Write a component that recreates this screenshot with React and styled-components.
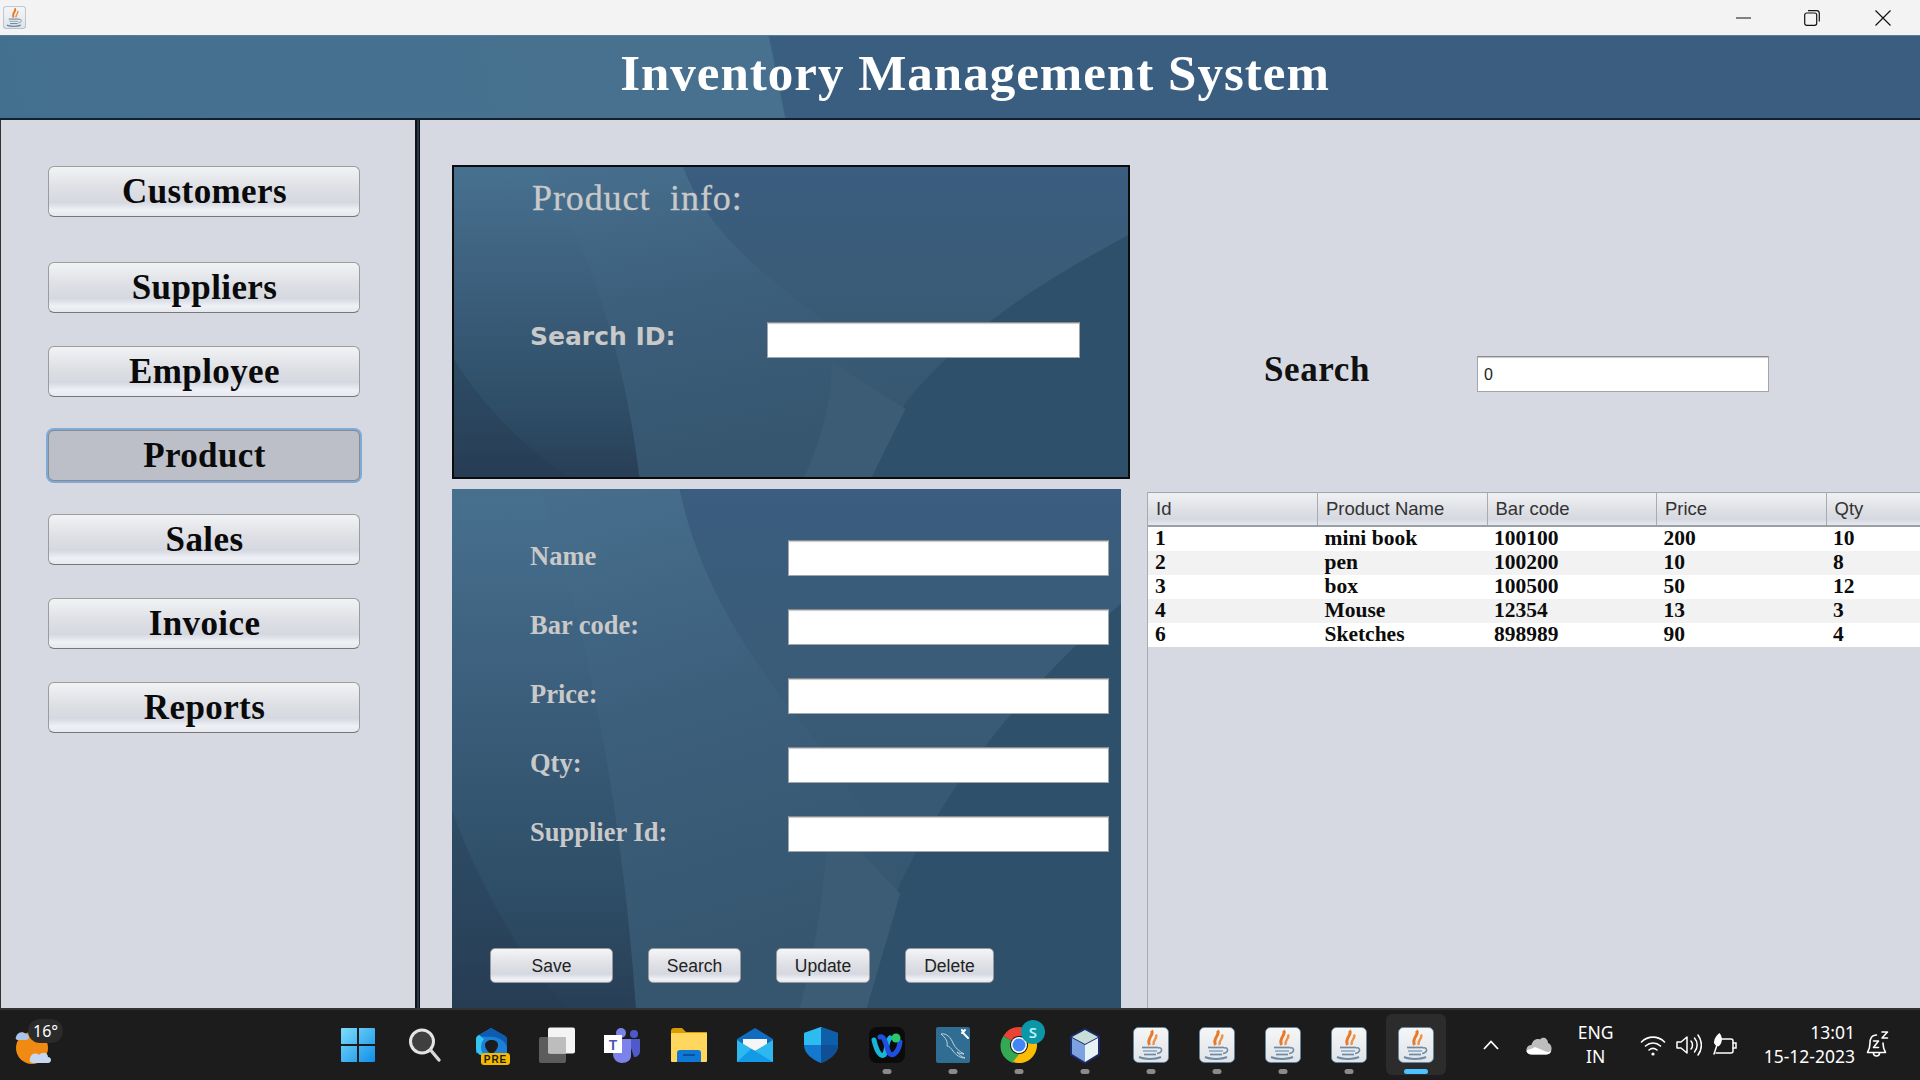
import React from 'react';
import styled, { createGlobalStyle } from 'styled-components';

const serif = '"Liberation Serif", "Times New Roman", serif';
const sans = '"Liberation Sans", Arial, sans-serif';
const ui = '"Noto Sans", "Open Sans", sans-serif';

const GlobalStyle = createGlobalStyle`
    html, body {
        margin: 0;
        padding: 0;
        overflow: hidden;
        background: #d6d9e1;
    }
    * {
        box-sizing: border-box;
    }
`;

const Screen = styled.div`
    width: 1920px;
    height: 1080px;
    display: flex;
    flex-direction: column;
    overflow: hidden;
`;

const TitleBar = styled.div`
    height: 35px;
    flex: none;
    display: flex;
    align-items: center;
    padding-left: 3px;
    background: #f3f3f3;
`;

const WindowControls = styled.div`
    margin-left: auto;
    display: flex;
    align-items: center;
    padding-right: 29px;
    gap: 55px;
`;

const MinimizeGlyph = styled.svg`
    margin-right: -2px;
`;

const Header = styled.header`
    height: 85px;
    flex: none;
    display: flex;
    align-items: center;
    justify-content: center;
    padding: 0 0 8px 30px;
    border-top: 1px solid #5b7c98;
    border-bottom: 2px solid #14202b;
    background: linear-gradient(78.6deg, #44708f 0%, #48718f 40.5%, #3a5e80 40.6%, #3a5d80 100%);
`;

const Title = styled.h1`
    margin: 0;
    font: bold 51px ${serif};
    letter-spacing: 1px;
    color: #fff;
    white-space: nowrap;
`;

const Body = styled.div`
    flex: 1;
    min-height: 0;
    display: flex;
    background: #24394b;
`;

const Sidebar = styled.nav`
    width: 417px;
    flex: none;
    display: flex;
    flex-direction: column;
    align-items: flex-start;
    gap: 33px;
    padding: 46px 0 0 47px;
    border-left: 1px solid #333;
    border-right: 2px solid #111;
    background: #d6d9e1;
`;

const NavButton = styled.button`
    width: 312px;
    height: 51px;
    flex: none;
    padding: 0 0 0 1px;
    margin-bottom: ${p => p.$extra || 0}px;
    border: 1px solid #9c9c9c;
    border-bottom-color: #777;
    border-radius: 6px;
    font: bold 35px ${serif};
    letter-spacing: 0.4px;
    color: #0a0a0a;
    background: ${p => p.$active
        ? '#bcbfc7'
        : 'linear-gradient(#f2f3f5 0%, #dfe1e6 40%, #d5d8e0 72%, #eff1f7 88%, #e6e8ee 100%)'};
    box-shadow: ${p => p.$active ? '0 0 0 2px #7fa9d6' : 'none'};
    ${p => p.$active && 'border-color: #868a92;'}
`;

const Main = styled.main`
    flex: 1;
    min-width: 0;
    display: flex;
    gap: 17px;
    margin-left: 2px;
    padding: 45px 0 0 32px;
    border-left: 1px solid #111;
    background: #d6d9e1;
`;

const LeftColumn = styled.div`
    width: 678px;
    flex: none;
    display: flex;
    flex-direction: column;
    gap: 10px;
`;

const WavePanel = styled.section`
    position: relative;
    overflow: hidden;
    background: #365875;
`;

const InfoPanel = styled(WavePanel)`
    height: 314px;
    flex: none;
    padding: 10px 0 0 78px;
    border: 2px solid #0c0c0c;
`;

const FormPanel = styled(WavePanel)`
    width: 669px;
    flex: 1;
    padding: 51px 0 0 38px;
`;

const WaveSvg = styled.svg`
    position: absolute;
    left: 0;
    top: 0;
    width: 100%;
    height: 100%;
`;

const PanelContent = styled.div`
    position: relative;
`;

const PanelTitle = styled.h2`
    margin: 0 0 103px;
    font: normal 36px/42px ${serif};
    letter-spacing: 0.9px;
    white-space: pre;
    color: #c9c9c9;
    -webkit-text-stroke: 0.3px #c9c9c9;
`;

const SearchIdRow = styled.div`
    display: flex;
    align-items: center;
`;

const SearchIdLabel = styled.label`
    width: 235px;
    padding: 0 0 7px;
    text-indent: -2px;
    font: bold 25px ${'"DejaVu Sans", Verdana, sans-serif'};
    color: #c9c9c9;
`;

const TextField = styled.input`
    width: ${p => p.$width}px;
    height: 36px;
    flex: none;
    padding: 2px 6px 0;
    border: 1px solid #a2a5aa;
    border-top-color: #8a8a8a;
    border-radius: 0;
    outline: none;
    font: 16px ${sans};
    color: #222;
    background: #fff;
    box-shadow: inset 0 2px 1px -1px #c9c9c9;
`;

const FormGrid = styled.div`
    display: grid;
    grid-template-columns: 258px 321px;
    grid-auto-rows: 36px;
    row-gap: 33px;
    align-items: center;
    margin-left: 40px;
`;

const FormLabel = styled.label`
    font: bold 26.5px ${serif};
    color: #c9c9c9;
    padding-bottom: 4px;
`;

const ButtonRow = styled.div`
    display: flex;
    gap: 35px;
    margin-top: 96px;
`;

const SmallButton = styled.button`
    width: ${p => p.$width}px;
    height: 35px;
    padding: 2px 0 0;
    border: 1px solid #9a9a9a;
    border-radius: 5px;
    font: 17.5px ${sans};
    color: #222;
    background: linear-gradient(#f4f5f7 0%, #dfe1e6 45%, #d5d8e0 75%, #f0f2f7 92%, #e4e6ec 100%);
`;

const RightColumn = styled.div`
    flex: 1;
    min-width: 0;
    display: flex;
    flex-direction: column;
`;

const SearchRow = styled.div`
    display: flex;
    align-items: center;
    height: 36px;
    flex: none;
    margin: 191px 0 100px;
    padding-left: 117px;
`;

const SearchLabel = styled.label`
    width: 213px;
    font: bold 35px ${serif};
    letter-spacing: 0.6px;
    color: #111;
    padding-bottom: 8px;
`;

const TableWrap = styled.div`
    flex: 1;
    overflow: hidden;
    border-left: 1px solid #a8abb0;
`;

const Table = styled.table`
    width: 848px;
    table-layout: fixed;
    border-collapse: collapse;
`;

const HeadCell = styled.th`
    height: 33px;
    padding: 0 0 0 8px;
    text-align: left;
    font: normal 18.5px ${sans};
    color: #333;
    border-top: 1px solid #a4a7ac;
    border-right: 1px solid #a8abb0;
    border-bottom: 2px solid #9a9ea6;
    background: linear-gradient(#f0f1f3 0%, #dfe1e6 50%, #d5d8e0 80%, #e8eaf0 100%);
`;

const Row = styled.tr`
    height: 24.2px;
    background: ${p => p.$odd ? '#f2f2f2' : '#fff'};
`;

const Cell = styled.td`
    padding: 0 0 2px 7px;
    font: bold 21.5px/22px ${serif};
    color: #0c0c0c;
    white-space: nowrap;
`;

const Taskbar = styled.footer`
    height: 72px;
    flex: none;
    display: flex;
    align-items: stretch;
    border-top: 2px solid #333;
    background: #1c1c1c;
    color: #fff;
`;

const WeatherBox = styled.div`
    position: relative;
    width: 325px;
    flex: none;
    padding: 13px 0 0 15px;
`;

const TempPill = styled.span`
    position: absolute;
    left: 28px;
    top: 9px;
    padding: 0 5px;
    height: 24px;
    border-radius: 12px;
    font: 16px/24px ${ui};
    background: #2b2b2b;
`;

const AppStrip = styled.div`
    display: flex;
`;

const AppSlot = styled.div`
    position: relative;
    width: 66.1px;
    flex: none;
    display: flex;
    justify-content: center;
    padding-top: 17px;
    &::before {
        content: '';
        display: ${p => p.$active ? 'block' : 'none'};
        position: absolute;
        left: 3px;
        right: 3px;
        top: 4px;
        bottom: 5px;
        border-radius: 6px;
        background: #2c2c2c;
    }
    svg {
        position: relative;
    }
`;

const RunDot = styled.span`
    position: absolute;
    bottom: 6px;
    left: 50%;
    width: ${p => p.$active ? 24 : 9}px;
    height: 5px;
    transform: translateX(-50%);
    border-radius: 3px;
    background: ${p => p.$active ? '#4cc2ff' : '#8a8a8a'};
`;

const Tray = styled.div`
    margin-left: auto;
    display: flex;
    align-items: center;
    padding: 0 27px 0 0;
`;

const TrayItem = styled.div`
    width: ${p => p.$width}px;
    margin-left: ${p => p.$gap || 0}px;
    display: flex;
    justify-content: center;
    align-items: center;
`;

const TrayText = styled.div`
    margin-left: ${p => p.$gap || 0}px;
    padding-bottom: 2px;
    font: 17.5px/24px ${ui};
    text-align: ${p => p.$align};
    white-space: nowrap;
`;

const Wave = () => (
    <WaveSvg viewBox="0 0 100 100" preserveAspectRatio="none">
        <defs>
            <linearGradient id="waveBase" x1="0" y1="0" x2="0" y2="1">
                <stop offset="0" stopColor="#3a5d80" />
                <stop offset="0.35" stopColor="#3a5c78" />
                <stop offset="1" stopColor="#33546c" />
            </linearGradient>
            <linearGradient id="waveBand" x1="0" y1="0" x2="0.3" y2="1">
                <stop offset="0" stopColor="#48718f" />
                <stop offset="0.5" stopColor="#3c5f7c" />
                <stop offset="1" stopColor="#36566f" />
            </linearGradient>
            <linearGradient id="waveLeft" x1="0" y1="0" x2="0" y2="1">
                <stop offset="0" stopColor="#47708f" />
                <stop offset="0.4" stopColor="#3b5e7b" />
                <stop offset="0.75" stopColor="#2f4f68" />
                <stop offset="1" stopColor="#283f56" />
            </linearGradient>
        </defs>
        <rect width="100" height="100" fill="url(#waveBase)" />
        <path d="M0 0 L34 0 C37 18 44 32 54 48 C62 62 70 78 76 100 L0 100 Z" fill="url(#waveBand)" />
        <path d="M0 0 L13 0 C19 22 25 55 27.5 100 L0 100 Z" fill="url(#waveLeft)" />
        <path d="M0 62 C4 76 10 90 17 100 L0 100 Z" fill="#24394f" opacity="0.3" />
        <path d="M100 22 C88 36 76 52 67 76 L61 100 L100 100 Z" fill="#2f506b" />
        <path d="M56 63 C56 78 54 90 52 100 L62 100 L67 78 Z" fill="#3b5c74" />
    </WaveSvg>
);

const JavaIcon = ({ size = 36 }) => (
    <svg width={size} height={size} viewBox="0 0 36 36" fill="none">
        <defs>
            <linearGradient id="javaTile" x1="0" y1="0" x2="0" y2="1">
                <stop offset="0" stopColor="#f6f6f6" />
                <stop offset="1" stopColor="#dfe3e8" />
            </linearGradient>
        </defs>
        <rect x="0.5" y="0.5" width="35" height="35" rx="5" fill="url(#javaTile)" stroke="#5b84a8" strokeOpacity="0.7" />
        <path d="M18.5 3.5 C22 8 13 10.5 16.5 18" stroke="#e8792a" strokeWidth="3" />
        <path d="M23 7.5 C25 11 19.5 13 20.5 18" stroke="#ee924a" strokeWidth="2.4" />
        <path d="M9 20.5 H25" stroke="#6d8ba5" strokeWidth="1.7" />
        <path d="M10 24 H24" stroke="#8aa3b8" strokeWidth="1.5" />
        <path d="M11 27.5 H23" stroke="#6d8ba5" strokeWidth="1.7" />
        <path d="M25 21 C29 20 29.5 24 27 25.5 C26 26 25 26.5 24 26.5" stroke="#6d8ba5" strokeWidth="1.5" />
        <path d="M6 30 C11 32.5 23 32.5 28 30" stroke="#6d8ba5" strokeWidth="2" />
    </svg>
);

const StartIcon = () => (
    <svg width="36" height="36" viewBox="0 0 36 36">
        <defs>
            <linearGradient id="startBlue" x1="0" y1="0" x2="1" y2="1">
                <stop offset="0" stopColor="#7fdcfb" />
                <stop offset="1" stopColor="#0f8fe8" />
            </linearGradient>
        </defs>
        <path d="M1 2 a1 1 0 0 1 1-1 H17 V17 H1 Z M19 1 H34 a1 1 0 0 1 1 1 V17 H19 Z M1 19 H17 V35 H2 a1 1 0 0 1 -1-1 Z M19 19 H35 V34 a1 1 0 0 1 -1 1 H19 Z" fill="url(#startBlue)" />
    </svg>
);

const SearchIcon = () => (
    <svg width="36" height="36" viewBox="-1 0 36 36">
        <circle cx="15" cy="14.5" r="11.5" fill="#3f3f3f" stroke="#e4e4e4" strokeWidth="3" />
        <path d="M24 23.5 L32 33" stroke="#d8d8d8" strokeWidth="3.4" strokeLinecap="round" />
    </svg>
);

const EdgeIcon = () => (
    <svg width="36" height="38" viewBox="-2 0 36 38" overflow="visible">
        <path d="M17 1 L31 9 C32.5 10 33 11 33 13 V26 H2 V13 C2 10 3 9 5 8 Z" fill="#1a80d8" />
        <path d="M17 1 L31 9 C32.5 10 33 11 33 13 V20 C31 14 26 11 20 10 C14 9 8 11 5 8 Z" fill="#0d5cb0" />
        <path d="M2 13 C2 10 3 9 5 8 L10 12 C6 17 6 24 10 28 L6 28 C3 26 2 24 2 20 Z" fill="#36c3f0" />
        <path d="M11 18 C11 12 24 11 24 18 C24 22 20 26 17.5 27 C15 26 11 22 11 18 Z" fill="#1c1c1c" />
        <rect x="7" y="26" width="29" height="12" rx="3" fill="#f5b800" />
        <text x="21.5" y="35.5" textAnchor="middle" fontFamily={sans} fontWeight="700" fontSize="10" letterSpacing="1" fill="#1c1c1c">PRE</text>
    </svg>
);

const TaskViewIcon = () => (
    <svg width="38" height="36" viewBox="-1.5 0 38 36" overflow="visible">
        <rect x="0.5" y="10" width="27" height="26" rx="2" fill="#5c5c5c" />
        <rect x="9.5" y="0.5" width="27" height="26" rx="2" fill="#f4f4f4" />
        <rect x="9.5" y="10" width="18" height="16.5" rx="1" fill="#bdbdbd" />
    </svg>
);

const TeamsIcon = () => (
    <svg width="38" height="36" viewBox="-1 0 38 36" overflow="visible">
        <circle cx="17" cy="6" r="5" fill="#7b83eb" />
        <circle cx="30" cy="7" r="4" fill="#5059c9" />
        <path d="M24 12 H36 V24 C36 28 33 30 30 30 Z" fill="#5059c9" />
        <path d="M9 12 H27 V29 C27 33 23 36 18 36 C13 36 9 32 9 27 Z" fill="#7b83eb" />
        <rect x="0" y="8" width="18" height="18" fill="#fff" />
        <text x="9" y="23" textAnchor="middle" fontFamily={ui} fontWeight="600" fontSize="15" fill="#4b53bc">T</text>
    </svg>
);

const FolderIcon = () => (
    <svg width="36" height="36" viewBox="0 0 36 36">
        <path d="M0 4 C0 2 1 1 3 1 H11 L15 5 H36 V12 H0 Z" fill="#d99c00" />
        <rect x="0" y="6" width="36" height="29" rx="1" fill="#ffd75e" />
        <path d="M6 35 V26 C6 24 7 23 9 23 H27 C29 23 30 24 30 26 V35 Z" fill="#0f78d4" />
        <rect x="12" y="27" width="12" height="2" fill="#0b4f9e" />
    </svg>
);

const MailIcon = () => (
    <svg width="36" height="36" viewBox="0 0 36 36">
        <path d="M0 12 L18 1 L36 12 V30 H0 Z" fill="#0f6cc0" />
        <path d="M6 12 H30 V18 L18 24 L6 18 Z" fill="#f6f6f6" />
        <path d="M0 13 L18 24 L36 13 V35 H0 Z" fill="#2fb8f0" />
        <path d="M0 35 L14 22 L18 24 L36 35 Z" fill="#129ae6" />
    </svg>
);

const ShieldIcon = () => (
    <svg width="34" height="36" viewBox="0 0 34 36">
        <path d="M17 0 L34 6 V18 C34 27 25 33 17 36 C9 33 0 27 0 18 V6 Z" fill="#1478cf" />
        <path d="M17 0 L34 6 V18 H17 Z" fill="#0e5ea8" />
        <path d="M17 0 L0 6 V18 H17 Z" fill="#2cbcf2" />
        <path d="M17 18 H34 C34 27 25 33 17 36 Z" fill="#0f4f96" />
    </svg>
);

const WebexIcon = () => (
    <svg width="36" height="36" viewBox="0 0 36 36">
        <rect width="36" height="36" rx="8" fill="#0b0b0b" />
        <path d="M5 13 C8 26 12 30 15 28 C18 25 17 15 21 11" fill="none" stroke="#17b5d8" strokeWidth="5" strokeLinecap="round" />
        <path d="M11 10 C16 8 17 20 20 26 C24 31 30 24 31 15" fill="none" stroke="#1f4fe0" strokeWidth="5" strokeLinecap="round" />
        <circle cx="27" cy="11" r="4.5" fill="#2bc86a" />
    </svg>
);

const MysqlIcon = () => (
    <svg width="34" height="36" viewBox="0 0 34 36">
        <rect width="34" height="36" rx="2" fill="#2f6d92" />
        <path d="M5 7 C11 6 15 11 17 16 C19 21 23 24 28 27 C25 27 23 26 21 25 C23 28 26 30 29 31 C24 31 20 28 17 24 C15 21 13 19 11 19 C12 15 10 11 5 7 Z" fill="none" stroke="#cfdbe4" strokeWidth="0.9" />
        <path d="M26 3 L28 7 L32 11 M29 3 L26 6" fill="none" stroke="#fff" strokeWidth="2" strokeLinecap="round" />
    </svg>
);

const ChromeIcon = () => (
    <svg width="36" height="36" viewBox="0 8 36 36" overflow="visible">
        <g transform="translate(0 8)">
            <path d="M18 0 A18 18 0 0 1 33.6 9 H18 A9 9 0 0 0 10.2 13.5 L2.4 9 A18 18 0 0 1 18 0 Z" fill="#ea4335" />
            <path d="M2.4 9 L10.2 13.5 A9 9 0 0 0 18 27 L12 36 A18 18 0 0 1 2.4 9 Z" fill="#34a853" />
            <path d="M33.6 9 A18 18 0 0 1 12 35 L18 27 A9 9 0 0 0 25.8 13.5 Z" fill="#fbbc04" />
            <circle cx="18" cy="18" r="8" fill="#fff" />
            <circle cx="18" cy="18" r="6.5" fill="#4285f4" />
        </g>
        <circle cx="32" cy="13" r="12" fill="#0c97a8" />
        <text x="32" y="18.5" textAnchor="middle" fontFamily={ui} fontWeight="600" fontSize="15" fill="#bff0f5">S</text>
    </svg>
);

const BoxIcon = () => (
    <svg width="34" height="38" viewBox="0 0 34 38">
        <path d="M17 1 L32 9 V28 L17 37 L2 28 V9 Z" fill="#1b2a6b" />
        <path d="M17 3 L30 10 L17 17 L4 10 Z" fill="#c8ded8" />
        <path d="M4 11 L17 18 V35 L4 27 Z" fill="#7da2e0" />
        <path d="M30 11 L17 18 V35 L30 27 Z" fill="#e8f3f6" />
    </svg>
);

const WeatherIcon = () => (
    <svg width="38" height="44" viewBox="0 0 38 44">
        <circle cx="17" cy="25" r="16" fill="#f08a12" />
        <path d="M1 14 C2 9 8 8 11 11 C15 11 15 17 11 17 H3 C1 17 0 15 1 14 Z" fill="#aac4ea" />
        <path d="M15 36 C15 31 21 29 24 32 C28 28 33 30 33 34 C37 34 37 40 33 40 H18 C15 40 14 37 15 36 Z" fill="#c5d7f2" />
    </svg>
);

const WifiIcon = () => (
    <svg width="26" height="24" viewBox="0 0 26 24" fill="none" stroke="#fff" strokeWidth="1.6" strokeLinecap="round">
        <path d="M1.5 9 C8 2.5 18 2.5 24.5 9" />
        <path d="M5.5 13 C10 9 16 9 20.5 13" />
        <path d="M9 17 C11.5 15 14.5 15 17 17" />
        <circle cx="13" cy="21" r="1.6" fill="#fff" stroke="none" />
    </svg>
);

const VolumeIcon = () => (
    <svg width="26" height="24" viewBox="0 0 26 24" fill="none" stroke="#fff" strokeWidth="1.5" strokeLinecap="round" strokeLinejoin="round">
        <path d="M1 9 V15 H5 L11 20 V4 L5 9 Z" />
        <path d="M15 8 C17 10 17 14 15 16" />
        <path d="M18.5 5 C22 9 22 15 18.5 19" />
        <path d="M22 2 C26.5 8 26.5 16 22 22" />
    </svg>
);

const BatteryIcon = () => (
    <svg width="26" height="26" viewBox="0 0 26 26" fill="none" stroke="#fff" strokeWidth="1.5" strokeLinecap="round">
        <path d="M9 7 H19 C20.5 7 21 8 21 9 V19 C21 20 20.5 21 19 21 H4" />
        <path d="M21 11 H24 V16 H21" />
        <path d="M2 11 C2 6 5 3 7.5 1 C10 4 11 9 8 13 C6.5 15 4 15 2 11 Z" fill="#fff" stroke="none" />
        <path d="M6 10 L2 22" />
    </svg>
);

const BellIcon = () => (
    <svg width="24" height="30" viewBox="0 0 24 30" fill="none" stroke="#fff" strokeWidth="1.6" strokeLinecap="round" strokeLinejoin="round">
        <path d="M10.5 5 C5.5 5 4 9 4 13 C4 17.5 3 20 1.5 22.5 H19.5 C18 20 17 17.5 17 13" />
        <path d="M7.5 23 C7.5 27 13.5 27 13.5 23" />
        <path d="M7.5 11 H12.5 L7.5 17.5 H12.5" />
        <path d="M16 2 H21.5 L16 8 H21.5" />
    </svg>
);

const CloudIcon = () => (
    <svg width="26" height="20" viewBox="0 0 26 20">
        <path d="M6 19.5 C2 19.5 0 17 0.5 14 C1 11.5 3 10 5.5 10 C6.5 5 11 3 14 4.5 C16.5 1 22 3 22 8 C25 9 26.5 13 25 16 C24 18.5 22 19.5 20 19.5 Z" fill="#bdbdbd" />
        <path d="M0.5 16 C1 15 3 14 5 14 L9 12 L21 17 C23 17 25 16.5 25.5 15 C25 18 23 19.5 20 19.5 H6 C3 19.5 1 18 0.5 16 Z" fill="#fff" />
    </svg>
);

const navItems = ['Customers', 'Suppliers', 'Employee', 'Product', 'Sales', 'Invoice', 'Reports'];
const formFields = ['Name', 'Bar code:', 'Price:', 'Qty:', 'Supplier Id:'];
const actions = [['Save', 123], ['Search', 93], ['Update', 94], ['Delete', 89]];
const columns = ['Id', 'Product Name', 'Bar code', 'Price', 'Qty'];
const products = [
    ['1', 'mini book', '100100', '200', '10'],
    ['2', 'pen', '100200', '10', '8'],
    ['3', 'box', '100500', '50', '12'],
    ['4', 'Mouse', '12354', '13', '3'],
    ['6', 'Sketches', '898989', '90', '4'],
];
const apps = [
    { Icon: StartIcon },
    { Icon: SearchIcon },
    { Icon: EdgeIcon },
    { Icon: TaskViewIcon },
    { Icon: TeamsIcon },
    { Icon: FolderIcon },
    { Icon: MailIcon },
    { Icon: ShieldIcon },
    { Icon: WebexIcon, running: true },
    { Icon: MysqlIcon, running: true },
    { Icon: ChromeIcon, running: true },
    { Icon: BoxIcon, running: true },
    { Icon: JavaIcon, running: true },
    { Icon: JavaIcon, running: true },
    { Icon: JavaIcon, running: true },
    { Icon: JavaIcon, running: true },
    { Icon: JavaIcon, running: true, active: true },
];

export default function App() {
    return (
        <Screen>
            <GlobalStyle />
            <TitleBar>
                <JavaIcon size={23} />
                <WindowControls>
                    <MinimizeGlyph width="15" height="16" viewBox="0 0 15 16"><path d="M0 8 H15" stroke="#111" strokeWidth="1" /></MinimizeGlyph>
                    <svg width="16" height="16" viewBox="0 0 16 16" fill="none" stroke="#111" strokeWidth="1.2">
                        <rect x="0.7" y="3" width="12" height="12.3" rx="2" />
                        <path d="M4 0.7 H12.5 C14.5 0.7 15.3 2 15.3 3.5 V11.5" />
                    </svg>
                    <svg width="16" height="16" viewBox="0 0 16 16" stroke="#111" strokeWidth="1.2"><path d="M0.5 0.5 L15.5 15.5 M15.5 0.5 L0.5 15.5" /></svg>
                </WindowControls>
            </TitleBar>
            <Header>
                <Title>Inventory Management System</Title>
            </Header>
            <Body>
                <Sidebar>
                    {navItems.map((item, i) => (
                        <NavButton key={item} $active={item === 'Product'} $extra={i === 0 ? 12 : 0}>{item}</NavButton>
                    ))}
                </Sidebar>
                <Main>
                    <LeftColumn>
                        <InfoPanel>
                            <Wave />
                            <PanelContent>
                                <PanelTitle>{'Product  info:'}</PanelTitle>
                                <SearchIdRow>
                                    <SearchIdLabel>Search ID:</SearchIdLabel>
                                    <TextField $width={313} />
                                </SearchIdRow>
                            </PanelContent>
                        </InfoPanel>
                        <FormPanel>
                            <Wave />
                            <PanelContent>
                                <FormGrid>
                                    {formFields.map(field => (
                                        <React.Fragment key={field}>
                                            <FormLabel>{field}</FormLabel>
                                            <TextField $width={321} />
                                        </React.Fragment>
                                    ))}
                                </FormGrid>
                                <ButtonRow>
                                    {actions.map(([label, width]) => (
                                        <SmallButton key={label} $width={width}>{label}</SmallButton>
                                    ))}
                                </ButtonRow>
                            </PanelContent>
                        </FormPanel>
                    </LeftColumn>
                    <RightColumn>
                        <SearchRow>
                            <SearchLabel>Search</SearchLabel>
                            <TextField $width={292} defaultValue="0" />
                        </SearchRow>
                        <TableWrap>
                            <Table>
                                <thead>
                                    <tr>
                                        {columns.map(col => <HeadCell key={col}>{col}</HeadCell>)}
                                    </tr>
                                </thead>
                                <tbody>
                                    {products.map((row, i) => (
                                        <Row key={row[0]} $odd={i % 2 === 1}>
                                            {row.map((value, j) => <Cell key={j}>{value}</Cell>)}
                                        </Row>
                                    ))}
                                </tbody>
                            </Table>
                        </TableWrap>
                    </RightColumn>
                </Main>
            </Body>
            <Taskbar>
                <WeatherBox>
                    <WeatherIcon />
                    <TempPill>16°</TempPill>
                </WeatherBox>
                <AppStrip>
                    {apps.map(({ Icon, running, active }, i) => (
                        <AppSlot key={i} $active={active}>
                            <Icon />
                            {running && <RunDot $active={active} />}
                        </AppSlot>
                    ))}
                </AppStrip>
                <Tray>
                    <TrayItem $width={30}>
                        <svg width="18" height="12" viewBox="0 0 18 12" fill="none" stroke="#fff" strokeWidth="1.8"><path d="M2 10 L9 2.5 L16 10" /></svg>
                    </TrayItem>
                    <TrayItem $width={36} $gap={15}><CloudIcon /></TrayItem>
                    <TrayItem $width={50} $gap={14}>
                        <TrayText $align="center">ENG<br />IN</TrayText>
                    </TrayItem>
                    <TrayItem $width={32} $gap={16}><WifiIcon /></TrayItem>
                    <TrayItem $width={32} $gap={4}><VolumeIcon /></TrayItem>
                    <TrayItem $width={32} $gap={4}><BatteryIcon /></TrayItem>
                    <TrayText $align="right" $gap={23}>13:01<br />15-12-2023</TrayText>
                    <TrayItem $width={30} $gap={8}><BellIcon /></TrayItem>
                </Tray>
            </Taskbar>
        </Screen>
    );
}
